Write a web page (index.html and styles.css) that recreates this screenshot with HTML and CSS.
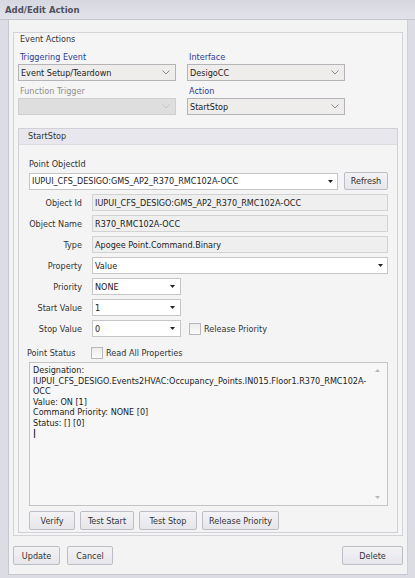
FILE: index.html
```html
<!DOCTYPE html>
<html>
<head>
<meta charset="utf-8">
<title>Add/Edit Action</title>
<link rel="stylesheet" href="styles.css">
</head>
<body>
<div class="window">
  <div class="titlebar">Add/Edit Action</div>
  <div class="client">
    <div class="group">
      <div class="caption">Event Actions</div>
      <div class="top-grid">
        <div class="field">
          <div class="lbl blue">Triggering Event</div>
          <div class="combo"><span>Event Setup/Teardown</span><svg class="chev" width="8" height="5" viewBox="0 0 8 5"><path d="M0.5 0.5L4 4L7.5 0.5" fill="none" stroke="#8a8a8a" stroke-width="1"/></svg></div>
        </div>
        <div class="field">
          <div class="lbl blue">Interface</div>
          <div class="combo"><span>DesigoCC</span><svg class="chev" width="8" height="5" viewBox="0 0 8 5"><path d="M0.5 0.5L4 4L7.5 0.5" fill="none" stroke="#8a8a8a" stroke-width="1"/></svg></div>
        </div>
        <div class="field">
          <div class="lbl gray">Function Trigger</div>
          <div class="combo disabled"><span></span><svg class="chev" width="8" height="5" viewBox="0 0 8 5"><path d="M0.5 0.5L4 4L7.5 0.5" fill="none" stroke="#c4c4c4" stroke-width="1"/></svg></div>
        </div>
        <div class="field">
          <div class="lbl blue">Action</div>
          <div class="combo"><span>StartStop</span><svg class="chev" width="8" height="5" viewBox="0 0 8 5"><path d="M0.5 0.5L4 4L7.5 0.5" fill="none" stroke="#8a8a8a" stroke-width="1"/></svg></div>
        </div>
      </div>

      <div class="panel">
        <div class="panel-head">StartStop</div>
        <div class="panel-body">
          <div class="plabel">Point ObjectId</div>
          <div class="pid-row">
            <div class="dd pid"><span>IUPUI_CFS_DESIGO:GMS_AP2_R370_RMC102A-OCC</span><svg class="tri" width="5" height="3" viewBox="0 0 5 3"><path d="M0 0H5L2.5 3Z" fill="#222"/></svg></div>
            <div class="btn refresh">Refresh</div>
          </div>

          <div class="form">
            <div class="flabel">Object Id</div>
            <div class="ro">IUPUI_CFS_DESIGO:GMS_AP2_R370_RMC102A-OCC</div>

            <div class="flabel">Object Name</div>
            <div class="ro">R370_RMC102A-OCC</div>

            <div class="flabel">Type</div>
            <div class="ro">Apogee Point.Command.Binary</div>

            <div class="flabel">Property</div>
            <div class="dd"><span>Value</span><svg class="tri" width="5" height="3" viewBox="0 0 5 3"><path d="M0 0H5L2.5 3Z" fill="#222"/></svg></div>

            <div class="flabel">Priority</div>
            <div class="cell"><div class="dd small"><span>NONE</span><svg class="tri" width="5" height="3" viewBox="0 0 5 3"><path d="M0 0H5L2.5 3Z" fill="#222"/></svg></div></div>

            <div class="flabel">Start Value</div>
            <div class="cell"><div class="dd small"><span>1</span><svg class="tri" width="5" height="3" viewBox="0 0 5 3"><path d="M0 0H5L2.5 3Z" fill="#222"/></svg></div></div>

            <div class="flabel">Stop Value</div>
            <div class="cell">
              <div class="dd small"><span>0</span><svg class="tri" width="5" height="3" viewBox="0 0 5 3"><path d="M0 0H5L2.5 3Z" fill="#222"/></svg></div>
              <span class="check rp"></span><span class="check-text">Release Priority</span>
            </div>
          </div>

          <div class="status-row">
            <span class="status-label">Point Status</span>
            <span class="check"></span><span class="check-text">Read All Properties</span>
          </div>

          <div class="memo">
            <div class="line">Designation:</div>
            <div class="line">IUPUI_CFS_DESIGO.Events2HVAC:Occupancy_Points.IN015.Floor1.R370_RMC102A-</div>
            <div class="line">OCC</div>
            <div class="line">Value: ON [1]</div>
            <div class="line">Command Priority: NONE [0]</div>
            <div class="line">Status: [] [0]</div>
            <div class="line caret">|</div>
            <svg class="sb-up" width="5" height="3" viewBox="0 0 5 3"><path d="M0 3H5L2.5 0Z" fill="#b8b8b8"/></svg>
            <svg class="sb-down" width="5" height="3" viewBox="0 0 5 3"><path d="M0 0H5L2.5 3Z" fill="#b8b8b8"/></svg>
          </div>

          <div class="btn-row">
            <div class="btn w-verify">Verify</div>
            <div class="btn w-tstart">Test Start</div>
            <div class="btn w-tstop">Test Stop</div>
            <div class="btn w-release">Release Priority</div>
          </div>
        </div>
      </div>
    </div>

    <div class="footer">
      <div class="btn w-update">Update</div>
      <div class="btn w-cancel">Cancel</div>
      <div class="spacer"></div>
      <div class="btn w-delete">Delete</div>
    </div>
  </div>
</div>
</body>
</html>
```

FILE: styles.css
```css
* { box-sizing: border-box; }
html, body { margin: 0; padding: 0; }
body {
  width: 415px;
  height: 578px;
  overflow: hidden;
  background: #dcdde4;
  font-family: "DejaVu Sans Condensed", "DejaVu Sans", sans-serif;
  font-stretch: condensed;
  font-size: 9px;
  color: #333;
}
.window { width: 415px; height: 578px; }
.titlebar {
  height: 20px;
  padding-left: 5px;
  display: flex;
  align-items: center;
  font-weight: bold;
  font-size: 9.5px;
  color: #50505e;
  background: linear-gradient(#d6d7e0, #e2e3ea);
  border-bottom: 1px solid #c4c5ce;
}
.client {
  margin: 0 7px 0 8px;
  height: 555px;
  background: #f3f3f3;
  border-left: 1px solid #c6c7cf;
  border-right: 1px solid #cfd0d6;
  border-bottom: 1px solid #c6c7cf;
  padding: 12px 5px 0 4px;
  display: flex;
  flex-direction: column;
}
.group {
  width: 390px;
  height: 504px;
  border: 1px solid #d3d3d8;
  background: #f5f5f5;
  display: flex;
  flex-direction: column;
}
.caption {
  height: 15px;
  line-height: 13px;
  padding-left: 6px;
  color: #333;
}
.top-grid {
  display: grid;
  grid-template-columns: 158px 158px;
  column-gap: 11px;
  row-gap: 4px;
  padding: 3px 4px 0 4px;
}
.field { display: flex; flex-direction: column; }
.lbl { height: 13px; line-height: 12px; padding-left: 2px; }
.blue { color: #2d3c98; }
.gray { color: #8e8e8e; }
.combo {
  height: 17px;
  border: 1px solid #b4b4b8;
  background: #efecec;
  display: flex;
  align-items: center;
  justify-content: space-between;
  padding: 0 5px 0 2px;
  color: #222;
}
.combo.disabled { background: #dedede; border-color: #cfcfcf; }
.chev { display: block; }

.panel {
  margin: 13px 4px 0 4px;
  height: 405px;
  border: 1px solid #d0d0d6;
  background: #f4f4f4;
  display: flex;
  flex-direction: column;
}
.panel-head {
  height: 16px;
  line-height: 15px;
  padding-left: 9px;
  background: #e7e7ed;
  border-bottom: 1px solid #dadae0;
  color: #333;
}
.panel-body {
  padding: 13px 9px 0 10px;
  display: flex;
  flex-direction: column;
}
.plabel { height: 13px; line-height: 13px; color: #333; }
.pid-row {
  margin-top: 1px;
  display: flex;
  justify-content: space-between;
  align-items: center;
}
.dd {
  height: 17px;
  border: 1px solid #c6c6c6;
  background: #fff;
  display: flex;
  align-items: center;
  justify-content: space-between;
  padding: 0 4px 0 2px;
  color: #222;
}
.dd.pid { width: 309px; }
.dd.small { width: 89px; padding-right: 5px; }
.tri { display: block; }
.btn {
  height: 17px;
  border: 1px solid #bdbdc5;
  border-radius: 2px;
  background: linear-gradient(#f3f3f6, #e6e6eb);
  display: flex;
  align-items: center;
  justify-content: center;
  color: #333;
}
.refresh { width: 44px; height: 18px; color: #2a2a2a; }

.form {
  margin-top: 4px;
  display: grid;
  grid-template-columns: 53px 296px;
  grid-auto-rows: 17px;
  column-gap: 10px;
  row-gap: 4px;
}
.flabel {
  display: flex;
  align-items: center;
  justify-content: flex-end;
  white-space: nowrap;
  color: #333;
}
.ro {
  border: 1px solid #d2d2d2;
  background: #efefef;
  display: flex;
  align-items: center;
  padding-left: 2px;
  color: #222;
}
.cell { display: flex; align-items: center; }
.check {
  width: 12px;
  height: 12px;
  border: 1px solid #b8b8b8;
  background: linear-gradient(#ececec, #fbfbfb);
  display: inline-block;
  flex: none;
}
.check.rp { margin-left: 8px; }
.check-text { margin-left: 3px; color: #333; white-space: nowrap; }

.status-row {
  margin-top: 10px;
  height: 12px;
  display: flex;
  align-items: center;
}
.status-label { width: 64px; margin-left: -2px; color: #333; }

.memo {
  position: relative;
  margin-top: 3px;
  height: 144px;
  border: 1px solid #c4c4c4;
  background: #f7f7f7;
  padding: 2px 0 0 3px;
  color: #222;
  overflow: hidden;
}
.line { height: 10.5px; line-height: 10.5px; white-space: nowrap; }
.caret { font-weight: bold; color: #000; }
.sb-up { position: absolute; right: 7px; top: 6px; }
.sb-down { position: absolute; right: 7px; bottom: 6px; }

.btn-row {
  margin-top: 5px;
  display: flex;
  gap: 5px;
}
.btn-row .btn { height: 19px; }
.w-verify { width: 46px; }
.w-tstart { width: 54px; }
.w-tstop { width: 58px; }
.w-release { width: 77px; }

.footer {
  margin-top: 10px;
  display: flex;
  gap: 7px;
  width: 390px;
}
.footer .btn { height: 19px; }
.spacer { flex: 1; }
.w-update { width: 47px; }
.w-cancel { width: 46px; }
.w-delete { width: 61px; }
```
